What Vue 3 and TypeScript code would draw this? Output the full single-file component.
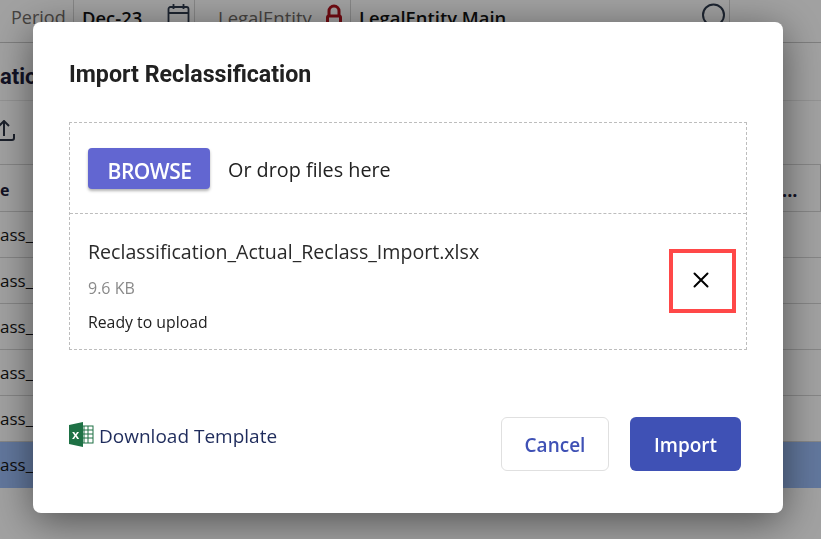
<script setup lang="ts">
const rows = [
  { text: 'ass_', mark: true },
  { text: 'ass_A', mark: false },
  { text: 'ass_', mark: true },
  { text: 'ass_', mark: true },
  { text: 'ass_', mark: true },
  { text: 'ass_', mark: true, active: true },
]
</script>

<template>
  <div class="page">
    <header class="filters">
      <span class="label period">Period</span>
      <span class="value dec">Dec-23</span>
      <span class="ico cal">
        <svg width="23" height="24" viewBox="0 0 23 24" fill="none" stroke="#2e3a4d" stroke-width="1.8">
          <rect x="1.5" y="4" width="20" height="18" rx="2" />
          <path d="M1.5 10h20M6.5 1v5M16.5 1v5" />
        </svg>
      </span>
      <span class="label entity">LegalEntity</span>
      <span class="ico lock">
        <svg width="16" height="24" viewBox="0 0 16 24" fill="none" stroke="#b3121d" stroke-width="3">
          <path d="M3 12V7a5 5 0 0 1 10 0v5" />
          <rect x="1.5" y="12" width="13" height="10" rx="1.5" />
        </svg>
      </span>
      <span class="value main">LegalEntity Main</span>
      <span class="ico search">
        <svg width="26" height="26" viewBox="0 0 26 26" fill="none" stroke="#2e3a4d" stroke-width="2">
          <circle cx="11.5" cy="12" r="10.5" />
        </svg>
      </span>
      <span class="fill"></span>
    </header>
    <div class="section-title">ation</div>
    <div class="toolbar">
      <svg width="16" height="24" viewBox="0 0 16 24" fill="none" stroke="#2b3344" stroke-width="2">
        <path d="M-1 6l5-5 5 5M4 1v15M-2 20h14a2 2 0 0 0 2-2v-4" />
      </svg>
    </div>
    <div class="thead">
      <span class="th">e</span>
      <span class="dots">...</span>
    </div>
    <div v-for="(row, i) in rows" :key="i" class="row" :class="{ active: row.active }">
      <span>{{ row.text }}</span>
      <i v-if="row.mark" class="mark"></i>
    </div>
  </div>

  <div class="backdrop"></div>

  <section class="modal">
    <h2 class="title">Import Reclassification</h2>

    <div class="drop">
      <div class="drop-top">
        <button class="browse">BROWSE</button>
        <span class="drop-text">Or drop files here</span>
      </div>
      <div class="file">
        <div class="file-info">
          <div class="file-name">Reclassification_Actual_Reclass_Import.xlsx</div>
          <div class="file-size">9.6 KB</div>
          <div class="file-status">Ready to upload</div>
        </div>
        <button class="remove" aria-label="Remove">
          <svg width="16" height="16" viewBox="0 0 16 16" fill="none" stroke="#000" stroke-width="2" stroke-linecap="round">
            <path d="M1.5 1.5l13 13M14.5 1.5l-13 13" />
          </svg>
        </button>
      </div>
    </div>

    <footer class="foot">
      <a class="template">
        <svg class="xl" width="25" height="25" viewBox="0 0 25 25">
          <rect x="11" y="4" width="13" height="17" fill="#fff" stroke="#1e7145" />
          <path d="M15 4v17M11 8h13M11 12h13M11 16h13M19 4v17" stroke="#1e7145" stroke-width="1" fill="none" />
          <path d="M0 3l14-3v25L0 22z" fill="#1e7145" />
          <text x="3" y="17" class="xl-x">x</text>
        </svg>
        <span>Download Template</span>
      </a>
      <div class="actions">
        <button class="cancel">Cancel</button>
        <button class="import">Import</button>
      </div>
    </footer>
  </section>
</template>

<style>
html, body { margin: 0; padding: 0; overflow: hidden; background: #fff; }
</style>

<style scoped>
.page {
  width: 821px;
  height: 539px;
  overflow: hidden;
  background: #fff;
  font-family: "Open Sans", "Noto Sans", sans-serif;
  color: #1c1c3a;
}
.filters {
  display: flex;
  align-items: flex-start;
  height: 42px;
  border-bottom: 1px solid #c8c8c8;
  font-size: 18px;
  box-sizing: content-box;
}
.filters > span {
  height: 42px;
  line-height: 35px;
  white-space: nowrap;
  box-sizing: border-box;
}
.label { color: #6f6a66; }
.value { color: #111; font-weight: 600; font-size: 18.4px; }
.period { width: 74px; padding-left: 11px; border-right: 1px solid #d4d4d4; }
.dec { width: 86px; padding-left: 8px; }
.cal { width: 35px; padding-top: 3px; padding-left: 7px; border-right: 1px solid #d4d4d4; }
.entity { width: 107px; padding-left: 23px; font-size: 18.5px; }
.lock { width: 49px; padding-top: 4px; padding-left: 24px; border-right: 1px solid #d4d4d4; }
.main { width: 343px; padding-left: 8px; }
.search { width: 36px; padding-top: 3px; padding-left: 8px; border-right: 1px solid #d4d4d4; }
.ico svg { display: block; }
.section-title {
  height: 57px;
  line-height: 68px;
  font-size: 22px;
  font-weight: 700;
  border-bottom: 1px solid #e8e8e8;
  font-family: Roboto, sans-serif;
}
.toolbar {
  height: 64px;
  padding-top: 19px;
  box-sizing: border-box;
  border-bottom: 1px solid #d4d4d4;
  background: #fff;
}
.toolbar svg { display: block; }
.thead {
  height: 47px;
  line-height: 50px;
  box-sizing: border-box;
  border-bottom: 1px solid #d4d4d4;
  font-size: 16px;
  font-weight: 700;
  display: flex;
  justify-content: space-between;
}
.dots { padding-right: 24px; width: 14px; font-size: 18px; border-right: 1px solid #d4d4d4; }
.row {
  height: 46px;
  box-sizing: border-box;
  border-bottom: 1px solid #d4d4d4;
  font-size: 17px;
  line-height: 44px;
  color: #151515;
  display: flex;
  align-items: center;
}
.row.active { background: #9bbdf8; border-bottom: none; }
.mark { display: block; width: 8px; height: 18px; background: #f3dcae; }

.backdrop {
  position: fixed;
  inset: 0;
  background: rgba(0, 0, 0, 0.37);
}
.modal {
  position: fixed;
  left: 33px;
  top: 22px;
  width: 750px;
  height: 491px;
  box-sizing: border-box;
  padding: 38px 36px 0;
  background: #fff;
  border-radius: 8px;
  box-shadow: 0 8px 40px rgba(0, 0, 0, .5);
  font-family: "Open Sans", "Noto Sans", sans-serif;
  color: #212121;
}
.title {
  margin: 0;
  font-family: Roboto, sans-serif;
  font-size: 23.2px;
  line-height: 28px;
  font-weight: 700;
  color: #212121;
}
.drop {
  margin-top: 34px;
  width: 678px;
  border: 1px dashed #bdbdbd;
  box-sizing: border-box;
}
.drop-top {
  height: 91px;
  padding: 25px 18px 0;
  box-sizing: border-box;
  display: flex;
  align-items: flex-start;
  border-bottom: 1px dashed #bdbdbd;
}
.browse {
  width: 122px;
  height: 41px;
  border: 0;
  padding: 0 0 0 1px;
  border-radius: 4px;
  background: #6266d1;
  color: #fff;
  font-family: "Open Sans", sans-serif;
  font-size: 21px;
  letter-spacing: -0.5px;
  line-height: 46px;
  font-weight: 600;
  box-shadow: 0 2px 3px rgba(0,0,0,.3);
}
.drop-text {
  margin-left: 18px;
  font-size: 19.8px;
  line-height: 44px;
  color: #212121;
}
.file {
  height: 135px;
  padding: 0 10px 0 18px;
  display: flex;
  justify-content: space-between;
  box-sizing: border-box;
}
.file-info { padding-top: 23px; }
.file-name { font-size: 19.6px; line-height: 30px; color: #2a2a2a; }
.file-size { margin-top: 10px; font-size: 16px; line-height: 22px; color: #8a8a8a; }
.file-status { margin-top: 12px; font-size: 15.8px; line-height: 22px; color: #212121; }
.remove {
  margin-top: 35px;
  width: 67px;
  height: 64px;
  padding: 0 3px 2px 0;
  background: #fff;
  border: 4px solid #ff4848;
  box-sizing: border-box;
  display: flex;
  align-items: center;
  justify-content: center;
}
.foot {
  margin-top: 67px;
  width: 678px;
  display: flex;
  justify-content: space-between;
  align-items: flex-start;
}
.template {
  display: flex;
  align-items: center;
  gap: 5px;
  font-size: 19px;
  line-height: 30px;
  color: #1f2c5c;
  margin-top: 4px;
}
.xl { display: block; margin-top: -3px; }
.xl-x { font: 700 13px "Liberation Sans", sans-serif; fill: #fff; }
.actions { display: flex; gap: 21px; padding-right: 6px; }
.actions button {
  width: 108px;
  height: 54px;
  border-radius: 6px;
  font-family: "Open Sans", sans-serif;
  font-size: 19px;
  font-weight: 600;
  padding: 2px 0 0;
}
.cancel { background: #fff; border: 1px solid #e0e0e0; color: #3f51b5; }
.actions .import { width: 111px; background: #3f51b5; border: 0; color: #fff; }
</style>
